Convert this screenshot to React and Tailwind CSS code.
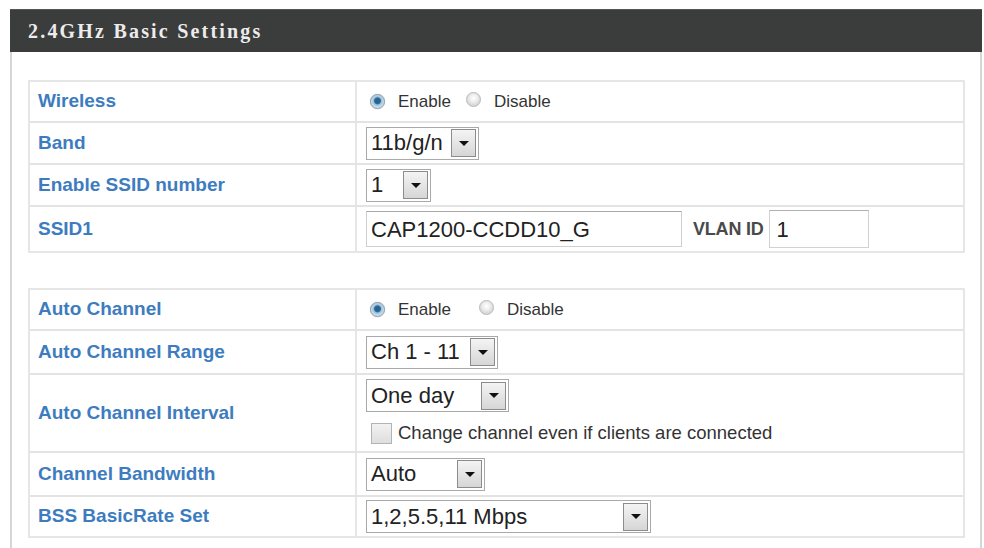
import React from "react";

const sans = { fontFamily: '"Liberation Sans", Arial, sans-serif' };

function Radio({ checked }) {
  return checked ? (
    <span className="inline-block w-[15px] h-[15px] rounded-full border border-[#7f97ab] bg-[radial-gradient(circle_at_50%_45%,#1f5e8c_0,#2a6d9c_3px,#9fc0d8_4px,#d9e6ef_7px)] shadow-[0_0_1px_#9bb]" />
  ) : (
    <span className="inline-block w-[15px] h-[15px] rounded-full border border-[#b8b8b8] bg-[radial-gradient(circle_at_50%_40%,#ffffff_0,#f2f2f2_3px,#d8d8d8_7px)]" />
  );
}

function RadioPair({ gap }) {
  return (
    <div className="flex items-center text-[17px] text-[#333]" style={sans}>
      <Radio checked />
      <span className="ml-[13px]">Enable</span>
      <span className={gap}>
        <Radio />
      </span>
      <span className="ml-[13px]">Disable</span>
    </div>
  );
}

function Select({ value, w }) {
  return (
    <div
      className={`flex items-center h-[33px] border border-[#a9a9a9] bg-white pl-[4px] pr-[2px] ${w}`}
      style={sans}
    >
      <span className="flex-1 text-[22px] leading-none text-[#222] whitespace-pre">{value}</span>
      <span className="flex items-center justify-center w-[25px] h-[28px] border border-[#8c8c8c] bg-[linear-gradient(#f4f4f4,#d6d6d6)]">
        <span className="w-0 h-0 border-l-[5px] border-r-[5px] border-t-[5px] border-l-transparent border-r-transparent border-t-[#111]" />
      </span>
    </div>
  );
}

function Row({ label, h, children, last }) {
  return (
    <div className={`grid grid-cols-[327px_1fr] ${h} ${last ? "" : "border-b-2 border-[#e3e3e3]"}`}>
      <div
        className="flex items-center pl-[8px] border-r-2 border-[#e6e6e6] text-[19px] font-bold text-[#3d7cbf]"
        style={sans}
      >
        {label}
      </div>
      <div className="flex items-center pl-[9px]">{children}</div>
    </div>
  );
}

export default function App() {
  return (
    <div className="w-[984px] h-[548px] overflow-hidden bg-white pt-[9px] pl-[10px]">
      <div className="w-[972px]">
        <div className="h-[43px] bg-[#3b3d3c] flex items-center pl-[18px] border-t border-[#555]">
          <span
            className="text-[20px] font-bold tracking-[2.2px] text-[#ececec]"
            style={{ fontFamily: '"Liberation Serif", "Times New Roman", serif' }}
          >
            2.4GHz Basic Settings
          </span>
        </div>
        <div className="border-x-2 border-[#d6d6d6] pl-[16px] pr-[15px] pt-[28px] pb-[20px]">
          <div className="border-2 border-[#e6e6e6]">
            <Row label="Wireless" h="h-[41px]">
              <div className="pl-[4px]">
                <RadioPair gap="ml-[15px]" />
              </div>
            </Row>
            <Row label="Band" h="h-[42px]">
              <Select value="11b/g/n" w="w-[113px]" />
            </Row>
            <Row label="Enable SSID number" h="h-[42px]">
              <Select value="1" w="w-[65px]" />
            </Row>
            <Row label="SSID1" h="h-[44px]" last>
              <div className="flex items-center" style={sans}>
                <div className="w-[316px] h-[36px] border border-[#cfcfcf] border-t-[#a8a8a8] flex items-center pl-[4px] text-[22px] text-[#222]">
                  CAP1200-CCDD10_G
                </div>
                <span className="ml-[11px] text-[18px] font-bold tracking-[-0.2px] text-[#4a4a4a]">VLAN ID</span>
                <div className="ml-[5px] w-[100px] h-[38px] border border-[#d2d2d2] border-t-[#b0b0b0] flex items-center pl-[7px] text-[22px] text-[#222]">
                  1
                </div>
              </div>
            </Row>
          </div>

          <div className="mt-[35px] border-2 border-[#e6e6e6]">
            <Row label="Auto Channel" h="h-[41px]">
              <div className="pl-[4px]">
                <RadioPair gap="ml-[28px]" />
              </div>
            </Row>
            <Row label="Auto Channel Range" h="h-[44px]">
              <Select value="Ch 1 - 11" w="w-[132px]" />
            </Row>
            <Row label="Auto Channel Interval" h="h-[78px]">
              <div className="flex flex-col">
                <Select value="One day" w="w-[143px]" />
                <div className="flex items-center mt-[7px] pl-[5px]" style={sans}>
                  <span className="w-[21px] h-[21px] border border-[#b3b3b3] bg-[linear-gradient(#f2f2f2,#dedede)]" />
                  <span className="ml-[6px] text-[18.5px] text-[#333]">Change channel even if clients are connected</span>
                </div>
              </div>
            </Row>
            <Row label="Channel Bandwidth" h="h-[44px]">
              <Select value="Auto" w="w-[119px]" />
            </Row>
            <Row label="BSS BasicRate Set" h="h-[39px]" last>
              <Select value="1,2,5.5,11 Mbps" w="w-[285px]" />
            </Row>
          </div>
        </div>
      </div>
    </div>
  );
}
